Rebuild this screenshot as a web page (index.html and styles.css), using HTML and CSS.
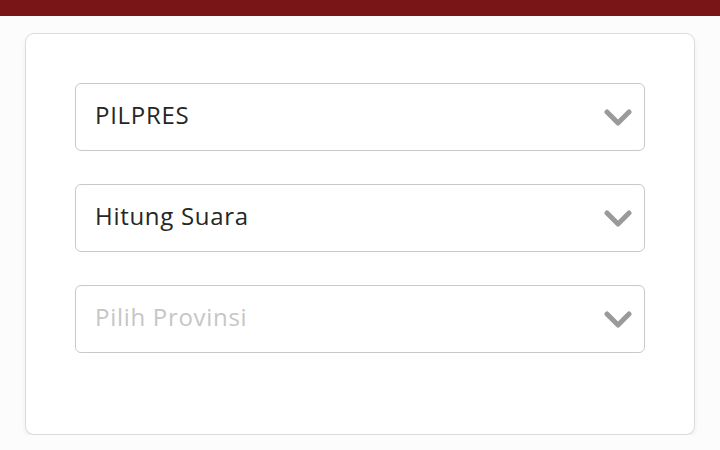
FILE: index.html
```html
<!DOCTYPE html>
<html>
<head>
<meta charset="utf-8">
<link rel="stylesheet" href="styles.css">
</head>
<body>
<div class="topbar"></div>
<main class="page">
  <div class="card">
    <div class="select"><span class="value">PILPRES</span><svg class="chev" viewBox="0 0 28 20"><path d="M3 4 L14 15 L25 4" fill="none" stroke="#9a9a9a" stroke-width="5" stroke-linecap="round" stroke-linejoin="round"/></svg></div>
    <div class="select"><span class="value">Hitung Suara</span><svg class="chev" viewBox="0 0 28 20"><path d="M3 4 L14 15 L25 4" fill="none" stroke="#9a9a9a" stroke-width="5" stroke-linecap="round" stroke-linejoin="round"/></svg></div>
    <div class="select"><span class="value placeholder">Pilih Provinsi</span><svg class="chev" viewBox="0 0 28 20"><path d="M3 4 L14 15 L25 4" fill="none" stroke="#9a9a9a" stroke-width="5" stroke-linecap="round" stroke-linejoin="round"/></svg></div>
  </div>
</main>
</body>
</html>
```
FILE: styles.css
```css
html, body { margin: 0; padding: 0; background: #fcfcfd; }
body { font-family: "Open Sans", "Noto Sans", sans-serif; }
.topbar { height: 16px; background: #7a1517; }
.page { padding: 17px 25px 0 25px; }
.card {
  background: #fff;
  border: 1px solid #dcdcdc;
  border-radius: 9px;
  box-shadow: 0 3px 5px rgba(0,0,0,0.07);
  padding: 49px 49px 81px 49px;
  display: flex;
  flex-direction: column;
  gap: 33px;
}
.select {
  height: 66px;
  border: 1px solid #c9c9c9;
  border-radius: 6px;
  display: flex;
  align-items: center;
  justify-content: space-between;
  padding: 0 12px 0 19px;
}
.value { font-size: 24px; color: #262626; letter-spacing: 0.7px; margin-top: -5px; }
.placeholder { color: #c6c6c6; }
.chev { width: 28px; height: 20px; margin-top: 2px; }
```
